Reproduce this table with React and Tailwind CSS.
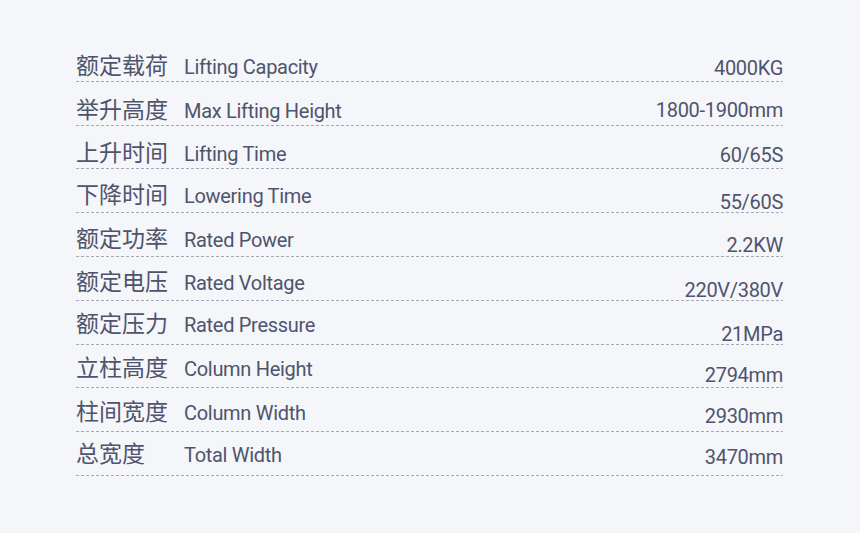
import React from "react";

const rows = [
  { zh: "额定载荷", en: "Lifting Capacity", val: "4000KG", lb: "pb-[4px]", vb: "pb-[3px]" },
  { zh: "举升高度", en: "Max Lifting Height", val: "1800-1900mm", lb: "pb-[4px]", vb: "pb-[5px]" },
  { zh: "上升时间", en: "Lifting Time", val: "60/65S", lb: "pb-[4px]", vb: "pb-[3px]" },
  { zh: "下降时间", en: "Lowering Time", val: "55/60S", lb: "pb-[6px]", vb: "pb-[0px]" },
  { zh: "额定功率", en: "Rated Power", val: "2.2KW", lb: "pb-[6px]", vb: "pb-[1px]" },
  { zh: "额定电压", en: "Rated Voltage", val: "220V/380V", lb: "pb-[7px]", vb: "pb-[0px]" },
  { zh: "额定压力", en: "Rated Pressure", val: "21MPa", lb: "pb-[9px]", vb: "pb-[0px]" },
  { zh: "立柱高度", en: "Column Height", val: "2794mm", lb: "pb-[8px]", vb: "pb-[2px]" },
  { zh: "柱间宽度", en: "Column Width", val: "2930mm", lb: "pb-[8px]", vb: "pb-[5px]" },
  { zh: "总宽度", en: "Total Width", val: "3470mm", lb: "pb-[10px]", vb: "pb-[8px]" },
];

function SpecRow({ row }) {
  return (
    <div className="flex flex-col h-[43.8px]">
      <div className="flex flex-1 items-end justify-between">
        <div className={"flex items-baseline " + row.lb}>
          <span className="w-[108px] text-[23px] leading-none font-['Noto_Sans_CJK_SC',sans-serif]">{row.zh}</span>
          <span className="text-[20px] leading-none tracking-[-0.3px] font-['Roboto',sans-serif]">{row.en}</span>
        </div>
        <span className={"text-[20px] leading-none tracking-[-0.3px] font-['Roboto',sans-serif] " + row.vb}>{row.val}</span>
      </div>
      <div className="h-px bg-[linear-gradient(to_right,#a5a9b8_3px,transparent_3px)] bg-[length:5px_1px] bg-repeat-x" />
    </div>
  );
}

export default function App() {
  return (
    <div className="w-[860px] h-[533px] bg-[#f5f6f9] text-[#4f546d] overflow-hidden">
      <div className="ml-[76px] w-[707px] pt-[38px]">
        {rows.map((r) => (
          <SpecRow key={r.zh} row={r} />
        ))}
      </div>
    </div>
  );
}
